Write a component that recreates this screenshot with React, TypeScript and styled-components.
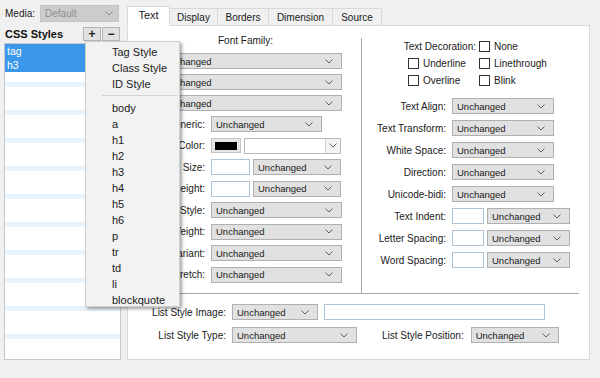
import styled, { createGlobalStyle } from "styled-components";

const GlobalStyle = createGlobalStyle`
  body {
    margin: 0;
    background: #f0f0f0;
  }
`;

const Chevron = ({ color = "#606060" }: { color?: string }) => (
  <svg width="8" height="5" viewBox="0 0 8 5">
    <polyline points="0.5,0.5 4,4 7.5,0.5" fill="none" stroke={color} strokeWidth="1" />
  </svg>
);

const Select = ({ width, value = "Unchanged" }: { width: number; value?: string }) => (
  <SelectBox $width={width}>
    <span>{value}</span>
    <Chevron />
  </SelectBox>
);

const Check = ({ label }: { label: string }) => (
  <CheckRow>
    <CheckBox />
    <span>{label}</span>
  </CheckRow>
);

const menuItems = ["body", "a", "h1", "h2", "h3", "h4", "h5", "h6", "p", "tr", "td", "li", "blockquote"];

const App = () => {
  return (
    <>
      <GlobalStyle />
      <Page>
        <Sidebar>
          <MediaRow>
            <span>Media:</span>
            <MediaCombo>
              <span>Default</span>
              <Chevron color="#8a8a8a" />
            </MediaCombo>
          </MediaRow>
          <HeaderRow>
            <Heading>CSS Styles</Heading>
            <Buttons>
              <SmallButton>+</SmallButton>
              <SmallButton>−</SmallButton>
            </Buttons>
          </HeaderRow>
          <StyleList>
            <ListItem $selected>tag</ListItem>
            <ListItem $selected>h3</ListItem>
          </StyleList>
        </Sidebar>

        <TabsArea>
          <TabBar>
            <Tab $active $width={43}>Text</Tab>
            <Tab $width={48}>Display</Tab>
            <Tab $width={51}>Borders</Tab>
            <Tab $width={64}>Dimension</Tab>
            <Tab $width={49}>Source</Tab>
          </TabBar>
          <Panel>
            <TopSection>
              <LeftColumn>
                <GroupTitle>Font Family:</GroupTitle>
                <FamilyList>
                  <Select width={184} />
                  <Select width={184} />
                  <Select width={184} />
                </FamilyList>
                <FieldGrid $label={77} $gap={5.5}>
                  <Label>Generic:</Label>
                  <Select width={111} />
                  <Label>Color:</Label>
                  <Pair>
                    <SwatchButton>
                      <Swatch />
                    </SwatchButton>
                    <ColorCombo>
                      <ComboField />
                      <ComboButton>
                        <Chevron />
                      </ComboButton>
                    </ColorCombo>
                  </Pair>
                  <Label>Font Size:</Label>
                  <Pair>
                    <TextInput $width={39} />
                    <Select width={88} />
                  </Pair>
                  <Label>Line Height:</Label>
                  <Pair>
                    <TextInput $width={39} />
                    <Select width={88} />
                  </Pair>
                  <Label>Font Style:</Label>
                  <Select width={131} />
                  <Label>Font Weight:</Label>
                  <Select width={131} />
                  <Label>Font Variant:</Label>
                  <Select width={131} />
                  <Label>Font Stretch:</Label>
                  <Select width={131} />
                </FieldGrid>
              </LeftColumn>

              <RightColumn>
                <DecoGrid>
                  <DecoLabel>Text Decoration:</DecoLabel>
                  <Check label="None" />
                  <Check label="Underline" />
                  <Check label="Linethrough" />
                  <Check label="Overline" />
                  <Check label="Blink" />
                </DecoGrid>
                <FieldGrid $label={84} $gap={6}>
                  <Label>Text Align:</Label>
                  <Select width={102} />
                  <Label>Text Transform:</Label>
                  <Select width={102} />
                  <Label>White Space:</Label>
                  <Select width={102} />
                  <Label>Direction:</Label>
                  <Select width={102} />
                  <Label>Unicode-bidi:</Label>
                  <Select width={102} />
                  <Label>Text Indent:</Label>
                  <Pair>
                    <TextInput $width={32} />
                    <Select width={83} />
                  </Pair>
                  <Label>Letter Spacing:</Label>
                  <Pair>
                    <TextInput $width={32} />
                    <Select width={83} />
                  </Pair>
                  <Label>Word Spacing:</Label>
                  <Pair>
                    <TextInput $width={32} />
                    <Select width={83} />
                  </Pair>
                </FieldGrid>
              </RightColumn>
            </TopSection>

            <BottomSection>
              <FieldGrid $label={80} $gap={7}>
                <Label>List Style Image:</Label>
                <Pair $gap={6}>
                  <Select width={86} />
                  <TextInput $width={221} />
                </Pair>
                <Label>List Style Type:</Label>
                <Pair $gap={7}>
                  <Select width={125} />
                  <InlineLabel>List Style Position:</InlineLabel>
                  <Select width={88} />
                </Pair>
              </FieldGrid>
            </BottomSection>
          </Panel>
        </TabsArea>

        <Menu>
          <MenuItem>Tag Style</MenuItem>
          <MenuItem>Class Style</MenuItem>
          <MenuItem>ID Style</MenuItem>
          <MenuSeparator />
          {menuItems.map((item) => (
            <MenuItem key={item}>{item}</MenuItem>
          ))}
        </Menu>
      </Page>
    </>
  );
};

export default App;

const Page = styled.div`
  position: relative;
  display: flex;
  gap: 6px;
  width: 600px;
  height: 378px;
  padding: 5px 0 0 4px;
  box-sizing: border-box;
  background: #f0f0f0;
  font-family: "Liberation Sans", Arial, sans-serif;
  font-size: 10px;
  color: #1a1a1a;
  overflow: hidden;
`;

const Sidebar = styled.div`
  display: flex;
  flex-direction: column;
  width: 117px;
`;

const MediaRow = styled.div`
  display: flex;
  align-items: center;
  height: 17px;
  padding-left: 1px;
  gap: 5px;
`;

const MediaCombo = styled.div`
  display: flex;
  align-items: center;
  justify-content: space-between;
  width: 82px;
  height: 17px;
  padding: 0 5px 0 4px;
  box-sizing: border-box;
  margin-left: auto;
  margin-right: 2px;
  background: #cccccc;
  border: 1px solid #c4c4c4;
  color: #8e8e8e;
`;

const HeaderRow = styled.div`
  display: flex;
  align-items: center;
  justify-content: space-between;
  margin-top: 6px;
  height: 12px;
`;

const Heading = styled.div`
  padding-left: 1px;
  font-size: 11px;
  font-weight: bold;
  color: #111;
`;

const Buttons = styled.div`
  display: flex;
  margin-right: 1px;
`;

const SmallButton = styled.div`
  display: flex;
  align-items: center;
  justify-content: center;
  width: 16px;
  height: 12px;
  margin-left: 1px;
  background: #e1e1e1;
  border: 1px solid #b5b5b5;
  font-size: 12px;
  font-weight: bold;
  line-height: 1;
`;

const StyleList = styled.div`
  margin-top: 3px;
  height: 317px;
  border: 1px solid #c8c8c8;
  box-sizing: border-box;
  background: repeating-linear-gradient(
    to bottom,
    #ffffff 0 10px,
    #e9f3fc 10px 15px,
    #ffffff 15px 28px
  );
`;

const ListItem = styled.div<{ $selected?: boolean }>`
  height: 14px;
  line-height: 14px;
  padding-left: 2px;
  font-size: 10.5px;
  background: ${({ $selected }) => ($selected ? "#3b97ea" : "transparent")};
  color: ${({ $selected }) => ($selected ? "#fff" : "#1a1a1a")};
`;

const TabsArea = styled.div`
  display: flex;
  flex-direction: column;
  width: 463px;
  padding-top: 1px;
`;

const TabBar = styled.div`
  display: flex;
  align-items: flex-end;
  height: 20px;
  position: relative;
  z-index: 1;
  margin-bottom: -1px;
`;

const Tab = styled.div<{ $active?: boolean; $width: number }>`
  display: flex;
  align-items: center;
  justify-content: center;
  width: ${({ $width }) => $width}px;
  height: ${({ $active }) => ($active ? 20 : 18)}px;
  box-sizing: border-box;
  border: 1px solid #d9d9d9;
  border-left-width: ${({ $active }) => ($active ? 1 : 0)}px;
  border-bottom-color: ${({ $active }) => ($active ? "#fff" : "#d9d9d9")};
  background: ${({ $active }) => ($active ? "#fff" : "#f0f0f0")};
  padding-bottom: ${({ $active }) => ($active ? 3 : 0)}px;
  font-size: ${({ $active }) => ($active ? 11 : 10)}px;
`;

const Panel = styled.div`
  display: flex;
  flex-direction: column;
  height: 335px;
  box-sizing: border-box;
  border: 1px solid #d9d9d9;
  background: #fff;
`;

const TopSection = styled.div`
  display: flex;
  height: 267px;
`;

const LeftColumn = styled.div`
  display: flex;
  flex-direction: column;
  width: 233px;
  padding-top: 9px;
`;

const GroupTitle = styled.div`
  height: 12px;
  line-height: 12px;
  text-align: center;
  padding-left: 2px;
`;

const FamilyList = styled.div`
  display: flex;
  flex-direction: column;
  gap: 5px;
  margin: 6px 0 5px 30px;
`;

const FieldGrid = styled.div<{ $label: number; $gap: number }>`
  display: grid;
  grid-template-columns: ${({ $label }) => $label}px auto;
  grid-auto-rows: 16px;
  column-gap: 6px;
  row-gap: ${({ $gap }) => $gap}px;
  align-items: center;
`;

const Label = styled.div`
  text-align: right;
  white-space: nowrap;
`;

const InlineLabel = styled.div`
  margin-left: 18px;
  white-space: nowrap;
`;

const Pair = styled.div<{ $gap?: number }>`
  display: flex;
  align-items: center;
  gap: ${({ $gap }) => $gap ?? 3}px;
`;

const SelectBox = styled.div<{ $width: number }>`
  display: flex;
  align-items: center;
  justify-content: space-between;
  width: ${({ $width }) => $width}px;
  height: 16px;
  box-sizing: border-box;
  padding: 0 8px 0 4px;
  background: #e1e1e1;
  border: 1px solid #b0b0b0;
  font-size: 9.5px;
  white-space: nowrap;
`;

const TextInput = styled.div<{ $width: number }>`
  width: ${({ $width }) => $width}px;
  height: 16px;
  box-sizing: border-box;
  background: #fff;
  border: 1px solid #aec3da;
`;

const SwatchButton = styled.div`
  display: flex;
  align-items: center;
  justify-content: center;
  width: 30px;
  height: 15px;
  box-sizing: border-box;
  background: #e6e6e6;
  border: 1px solid #c4c4c4;
`;

const Swatch = styled.div`
  width: 22px;
  height: 8px;
  background: #000;
`;

const ColorCombo = styled.div`
  display: flex;
  width: 97px;
  height: 16px;
  box-sizing: border-box;
  border: 1px solid #b9b9b9;
  background: #fff;
`;

const ComboField = styled.div`
  flex: 1;
`;

const ComboButton = styled.div`
  display: flex;
  align-items: center;
  justify-content: center;
  width: 14px;
  border-left: 1px solid #d4d4d4;
  background: #f4f4f4;
`;

const RightColumn = styled.div`
  flex: 1;
  display: flex;
  flex-direction: column;
  margin-top: 12px;
  border-left: 1px solid #a8a8a8;
`;

const DecoGrid = styled.div`
  display: grid;
  grid-template-columns: 71px auto;
  grid-auto-rows: 12px;
  row-gap: 5px;
  margin: 2px 0 12px 46px;
  align-items: center;
`;

const DecoLabel = styled.div`
  justify-self: end;
  padding-right: 3px;
  white-space: nowrap;
`;

const CheckRow = styled.div`
  display: flex;
  align-items: center;
  gap: 4px;
`;

const CheckBox = styled.div`
  width: 11px;
  height: 11px;
  box-sizing: border-box;
  border: 1px solid #333;
  background: #fff;
`;

const BottomSection = styled.div`
  margin: 0 10px 0 18px;
  padding-top: 10px;
  border-top: 1px solid #a8a8a8;
`;

const Menu = styled.div`
  position: absolute;
  z-index: 2;
  left: 85px;
  top: 41px;
  width: 95px;
  height: 266px;
  box-sizing: border-box;
  padding-top: 2px;
  background: #f2f2f2;
  border: 1px solid #cfcfcf;
  box-shadow: 2px 2px 3px rgba(0, 0, 0, 0.35);
  font-size: 11px;
`;

const MenuItem = styled.div`
  height: 16px;
  line-height: 16px;
  padding-left: 26px;
  color: #1a1a1a;
`;

const MenuSeparator = styled.div`
  height: 1px;
  margin: 3px 2px 4px 16px;
  background: #d4d4d4;
`;
